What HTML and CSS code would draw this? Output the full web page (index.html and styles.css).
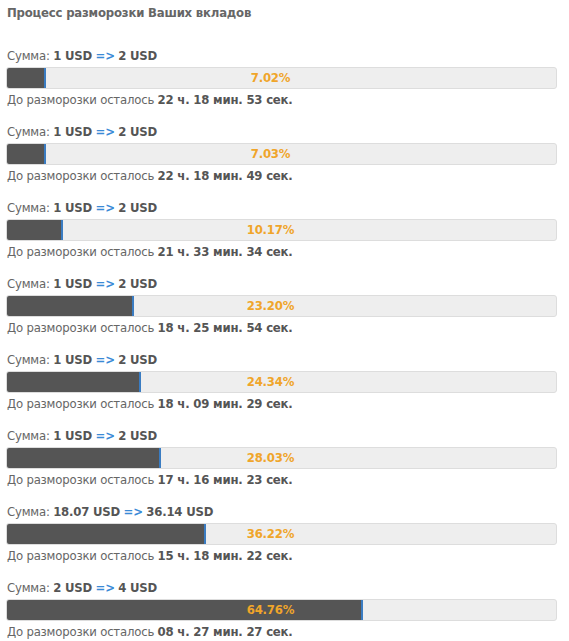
FILE: index.html
```html
<!DOCTYPE html>
<html lang="ru">
<head>
  <meta charset="UTF-8">
  <title>Процесс разморозки Ваших вкладов</title>
  <link rel="stylesheet" href="styles.css">
</head>
<body>
  <div class="container">
    <h1>Процесс разморозки Ваших вкладов</h1>

    <div class="deposit">
      <div class="sum">Сумма: <b>1 USD</b> <span class="arrow">=&gt;</span> <b>2 USD</b></div>
      <div class="bar"><div class="fill" style="width: 7.02%"></div><span class="percent">7.02%</span></div>
      <div class="left">До разморозки осталось <b>22 ч. 18 мин. 53 сек.</b></div>
    </div>

    <div class="deposit">
      <div class="sum">Сумма: <b>1 USD</b> <span class="arrow">=&gt;</span> <b>2 USD</b></div>
      <div class="bar"><div class="fill" style="width: 7.03%"></div><span class="percent">7.03%</span></div>
      <div class="left">До разморозки осталось <b>22 ч. 18 мин. 49 сек.</b></div>
    </div>

    <div class="deposit">
      <div class="sum">Сумма: <b>1 USD</b> <span class="arrow">=&gt;</span> <b>2 USD</b></div>
      <div class="bar"><div class="fill" style="width: 10.17%"></div><span class="percent">10.17%</span></div>
      <div class="left">До разморозки осталось <b>21 ч. 33 мин. 34 сек.</b></div>
    </div>

    <div class="deposit">
      <div class="sum">Сумма: <b>1 USD</b> <span class="arrow">=&gt;</span> <b>2 USD</b></div>
      <div class="bar"><div class="fill" style="width: 23.20%"></div><span class="percent">23.20%</span></div>
      <div class="left">До разморозки осталось <b>18 ч. 25 мин. 54 сек.</b></div>
    </div>

    <div class="deposit">
      <div class="sum">Сумма: <b>1 USD</b> <span class="arrow">=&gt;</span> <b>2 USD</b></div>
      <div class="bar"><div class="fill" style="width: 24.34%"></div><span class="percent">24.34%</span></div>
      <div class="left">До разморозки осталось <b>18 ч. 09 мин. 29 сек.</b></div>
    </div>

    <div class="deposit">
      <div class="sum">Сумма: <b>1 USD</b> <span class="arrow">=&gt;</span> <b>2 USD</b></div>
      <div class="bar"><div class="fill" style="width: 28.03%"></div><span class="percent">28.03%</span></div>
      <div class="left">До разморозки осталось <b>17 ч. 16 мин. 23 сек.</b></div>
    </div>

    <div class="deposit">
      <div class="sum">Сумма: <b>18.07 USD</b> <span class="arrow">=&gt;</span> <b>36.14 USD</b></div>
      <div class="bar"><div class="fill" style="width: 36.22%"></div><span class="percent">36.22%</span></div>
      <div class="left">До разморозки осталось <b>15 ч. 18 мин. 22 сек.</b></div>
    </div>

    <div class="deposit">
      <div class="sum">Сумма: <b>2 USD</b> <span class="arrow">=&gt;</span> <b>4 USD</b></div>
      <div class="bar"><div class="fill" style="width: 64.76%"></div><span class="percent">64.76%</span></div>
      <div class="left">До разморозки осталось <b>08 ч. 27 мин. 27 сек.</b></div>
    </div>
  </div>
</body>
</html>
```

FILE: styles.css
```css
/* Общие стили */
body {
  margin: 0;
  background: #fff;
  font-family: "DejaVu Sans Condensed", "DejaVu Sans", sans-serif;
  font-size: 13px;
  line-height: 16px;
  letter-spacing: -0.2px;
  color: #666;
}
.container {
  padding: 5px 6px;
}
h1 {
  margin: 0 0 26px 1px;
  font-size: 13px;
  line-height: 16px;
  font-weight: bold;
  color: #666;
}
b {
  color: #555;
}
/* Блок вклада */
.deposit {
  margin-bottom: 15px;
}
.sum,
.left {
  padding-left: 1px;
}
.sum {
  padding-top: 1px;
  margin-bottom: -1px;
}
.arrow {
  color: #3a8ad6;
  font-weight: bold;
}
/* Прогресс-бар */
.bar {
  position: relative;
  box-sizing: border-box;
  height: 22px;
  margin: 4px 6px 3px 0;
  background: #eee;
  border: 1px solid #ddd;
  border-radius: 3px;
  overflow: hidden;
}
.fill {
  height: 100%;
  box-sizing: border-box;
  background: #555;
  border-right: 2px solid #3a7cc2;
}
.percent {
  position: absolute;
  top: 0;
  left: 0;
  right: 22px;
  text-align: center;
  line-height: 20px;
  font-weight: bold;
  color: #f0a52a;
}
```
